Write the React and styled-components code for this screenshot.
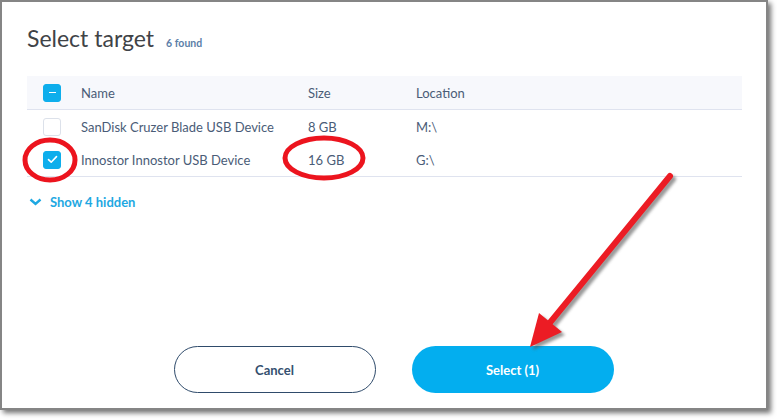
import React from 'react';
import styled, { createGlobalStyle } from 'styled-components';

const GlobalStyle = createGlobalStyle`
    html, body {
        margin: 0;
        padding: 0;
        background: #ffffff;
        font-family: Lato, "Open Sans", sans-serif;
    }
`;

const Stage = styled.div`
    position: relative;
    width: 777px;
    height: 420px;
`;

const Dialog = styled.div`
    box-sizing: border-box;
    width: 768px;
    height: 410px;
    border: 2px solid #858585;
    background: #ffffff;
    box-shadow: 3px 3px 5px rgba(0, 0, 0, 0.55);
    display: flex;
    flex-direction: column;
    padding: 0 24px 15px 25px;
`;

const TitleRow = styled.div`
    display: flex;
    align-items: baseline;
    gap: 12px;
    height: 74px;
    padding-top: 22px;
    box-sizing: border-box;
`;

const Title = styled.h1`
    margin: 0;
    font-size: 23px;
    font-weight: 400;
    color: #3f4347;
`;

const Found = styled.span`
    font-size: 10.5px;
    font-weight: 700;
    color: #5b80a8;
`;

const Row = styled.div`
    display: grid;
    grid-template-columns: 54px 227px 108px 1fr;
    align-items: center;
    height: 33px;
    background: ${p => (p.head ? '#f7f8fc' : 'transparent')};
    border-bottom: ${p => (p.line ? '1px solid #dfe3ef' : 'none')};
    font-size: 13px;
    color: #4a5c77;
`;

const Cell = styled.div`
    display: flex;
    align-items: center;
    white-space: nowrap;
`;

const Box = styled.div`
    box-sizing: border-box;
    width: 18px;
    height: 18px;
    margin-left: 16px;
    border-radius: 3px;
    display: flex;
    align-items: center;
    justify-content: center;
    background: ${p => (p.on ? '#0eaeec' : '#ffffff')};
    border: 1px solid ${p => (p.on ? '#0eaeec' : '#dce1ea')};
`;

const Dash = styled.span`
    width: 7px;
    height: 1.5px;
    background: #ffffff;
`;

const ShowHidden = styled.div`
    display: flex;
    align-items: center;
    gap: 8px;
    margin-top: 17px;
    padding-left: 2px;
    font-size: 13px;
    font-weight: 700;
    color: #1ea8e2;
`;

const Footer = styled.div`
    margin-top: auto;
    display: flex;
    justify-content: center;
    gap: 36px;
    padding-left: 18px;
`;

const Button = styled.button`
    box-sizing: border-box;
    width: 202px;
    height: 47px;
    border-radius: 24px;
    font-family: Lato, "Open Sans", sans-serif;
    font-size: 13px;
    font-weight: 700;
    cursor: pointer;
    background: ${p => (p.primary ? '#03aeef' : '#ffffff')};
    color: ${p => (p.primary ? '#ffffff' : '#34506f')};
    border: ${p => (p.primary ? 'none' : '1.5px solid #2f4b6b')};
`;

const Marks = styled.svg`
    position: absolute;
    left: 0;
    top: 0;
    pointer-events: none;
`;

const devices = [
    { name: 'SanDisk Cruzer Blade USB Device', size: '8 GB', loc: 'M:\\', on: false },
    { name: 'Innostor Innostor USB Device', size: '16 GB', loc: 'G:\\', on: true },
];

const Check = () => (
    <svg width="11" height="9" viewBox="0 0 11 9">
        <path d="M1.5 4.6 L4.2 7.2 L9.5 1.6" fill="none" stroke="#fff" strokeWidth="1.6" strokeLinecap="round" strokeLinejoin="round" />
    </svg>
);

const App = () => (
    <Stage>
        <GlobalStyle />
        <Dialog>
            <TitleRow>
                <Title>Select target</Title>
                <Found>6 found</Found>
            </TitleRow>
            <Row head line>
                <Cell><Box on><Dash /></Box></Cell>
                <Cell>Name</Cell>
                <Cell>Size</Cell>
                <Cell>Location</Cell>
            </Row>
            {devices.map((d, i) => (
                <Row key={d.name} line={i === devices.length - 1}>
                    <Cell><Box on={d.on}>{d.on && <Check />}</Box></Cell>
                    <Cell>{d.name}</Cell>
                    <Cell>{d.size}</Cell>
                    <Cell>{d.loc}</Cell>
                </Row>
            ))}
            <ShowHidden>
                <svg width="13" height="8" viewBox="0 0 13 8">
                    <path d="M1.5 1.5 L6.5 6 L11.5 1.5" fill="none" stroke="#1ea8e2" strokeWidth="2.4" />
                </svg>
                Show 4 hidden
            </ShowHidden>
            <Footer>
                <Button>Cancel</Button>
                <Button primary>Select (1)</Button>
            </Footer>
        </Dialog>
        <Marks width="777" height="420" viewBox="0 0 777 420">
            <defs>
                <filter id="blur" x="-20%" y="-20%" width="140%" height="140%">
                    <feGaussianBlur stdDeviation="1.5" />
                </filter>
            </defs>
            <ellipse cx="50" cy="160" rx="25" ry="20" fill="none" stroke="#ec141e" strokeWidth="5" />
            <ellipse cx="324" cy="158" rx="39" ry="20" fill="none" stroke="#ec141e" strokeWidth="5" />
            <g filter="url(#blur)" opacity="0.6" transform="translate(3 3)">
                <line x1="670" y1="176" x2="548" y2="325" stroke="#555" strokeWidth="6" strokeLinecap="round" />
                <polygon points="530,347 539,313 562,332" fill="#555" />
            </g>
            <line x1="670" y1="176" x2="548" y2="325" stroke="#ec1c24" strokeWidth="6" strokeLinecap="round" />
            <polygon points="530,347 539,313 562,332" fill="#ec1c24" />
        </Marks>
    </Stage>
);

export default App;
